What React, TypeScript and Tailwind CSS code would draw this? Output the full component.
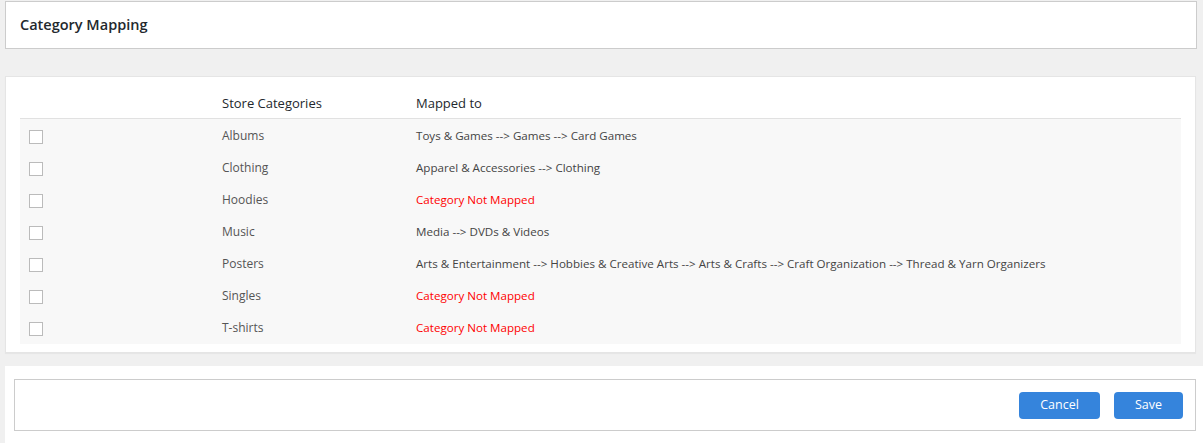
const rows: { name: string; mapped: string | null }[] = [
  { name: 'Albums', mapped: 'Toys & Games --> Games --> Card Games' },
  { name: 'Clothing', mapped: 'Apparel & Accessories --> Clothing' },
  { name: 'Hoodies', mapped: null },
  { name: 'Music', mapped: 'Media --> DVDs & Videos' },
  {
    name: 'Posters',
    mapped:
      'Arts & Entertainment --> Hobbies & Creative Arts --> Arts & Crafts --> Craft Organization --> Thread & Yarn Organizers',
  },
  { name: 'Singles', mapped: null },
  { name: 'T-shirts', mapped: null },
];

export default function App() {
  return (
    <div className="min-h-screen bg-[#f0f0f0] pt-px font-['Open_Sans','Noto_Sans',sans-serif] text-[#444]">
      {/* Title */}
      <div className="ml-[5px] w-[1192px] h-[48px] border border-[#cccccc] bg-white flex items-center px-[14px]">
        <h1 className="text-[14.5px] font-semibold text-[#23282d]">Category Mapping</h1>
      </div>

      {/* Mapping table */}
      <div className="mt-[27px] ml-[5px] w-[1191px] border border-[#e5e5e5] bg-white px-[14px] pt-[12px] pb-[8px] shadow-[0_1px_1px_rgba(0,0,0,0.04)]">
        <div className="flex items-center h-[30px] border-b border-[#e1e1e1] text-[13px] text-[#23282d]">
          <div className="w-[202px]" />
          <div className="w-[194px]">Store Categories</div>
          <div>Mapped to</div>
        </div>
        <div className="bg-[#f8f8f8] pt-px">
          {rows.map((r) => (
            <div key={r.name} className="flex items-center h-[32px] text-[12px]">
              <div className="w-[202px] pl-[9px]">
                <div className="mt-[2px] w-[14px] h-[14px] border border-[#bbbbbb] bg-white" />
              </div>
              <div className="w-[194px] text-[#555]">{r.name}</div>
              {r.mapped ? (
                <div className="text-[11.6px] text-[#444]">{r.mapped}</div>
              ) : (
                <div className="text-[11.6px] text-[#ff0000]">Category Not Mapped</div>
              )}
            </div>
          ))}
        </div>
      </div>

      {/* Actions */}
      <div className="mt-[13px] ml-[5px] bg-white pt-[13px] pb-[12px] pl-[9px] pr-[7px]">
        <div className="h-[52px] w-[1182px] border border-[#cccccc] flex items-center justify-end gap-[14px] pr-[12px]">
          <button className="w-[81px] h-[27px] rounded-[4px] bg-[#3584dc] text-white text-[12.5px]">
            Cancel
          </button>
          <button className="w-[69px] h-[27px] rounded-[4px] bg-[#3584dc] text-white text-[12.5px]">
            Save
          </button>
        </div>
      </div>
    </div>
  );
}
